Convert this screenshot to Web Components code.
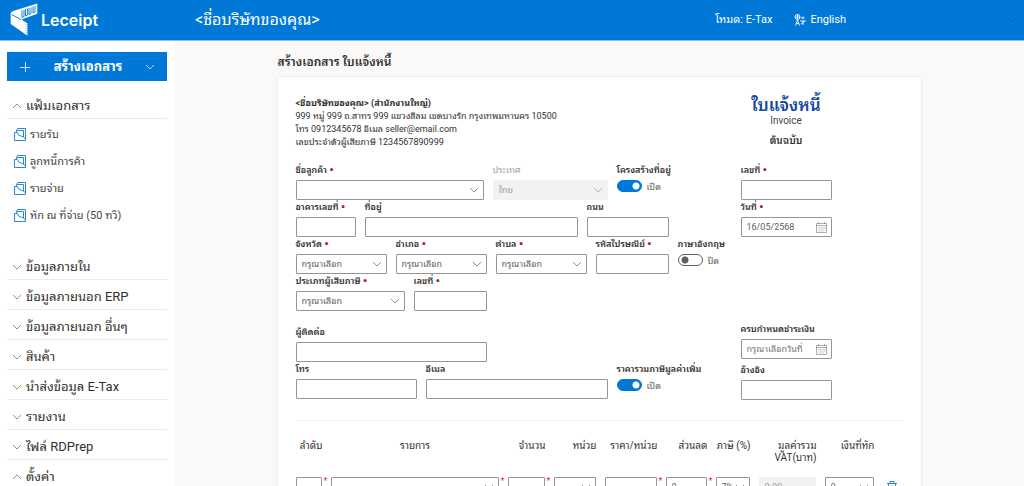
<!DOCTYPE html>
<html lang="th">
<head>
<meta charset="utf-8">
<title>Leceipt</title>
<style>
    html, body { margin: 0; height: 100%; }
    body {
        overflow: hidden;
        background: #faf9f8;
        color: #323130;
        font-family: Roboto, "Noto Sans Thai Looped", "Noto Looped Thai", Loma, Garuda, Waree, Sarabun, "Noto Serif Thai", "Noto Sans", sans-serif;
    }
</style>
</head>
<body>
<leceipt-app></leceipt-app>

<script>
const CHEVRON = '<svg class="chevron" viewBox="0 0 10 10" width="10" height="10" fill="none" stroke="currentColor" stroke-width="0.7"><path d="M1 3l4 4 4-4"/></svg>';

// shared reset for every shadow root
const BASE = `
    * { box-sizing: border-box; }
    svg { display: block; flex: none; }
    button, input, select { font: inherit; color: inherit; margin: 0; border-radius: 0; }
    a { color: inherit; text-decoration: none; }
`;

class BaseElement extends HTMLElement {
    connectedCallback() {
        if (this.shadowRoot) return;
        this.attachShadow({ mode: 'open' });
        this.shadowRoot.innerHTML = `<style>${BASE}${this.styles()}</style>${this.render()}`;
    }
    attr(name) {
        return this.getAttribute(name) || '';
    }
    styles() { return ''; }
    render() { return ''; }
}

class AppHeader extends BaseElement {
    styles() {
        return `
            :host { display: block; background: #0078d7; color: #fff; border-bottom: 1px solid #8cc0ec; }
            header { display: grid; grid-template-columns: 195px 1fr auto; align-items: center; height: 40px; }
            .brand { display: flex; align-items: center; gap: 3px; padding-left: 10px; font: 600 16px/20px Inter, sans-serif; }
            .company { font-size: 16px; line-height: 24px; }
            .tools { display: flex; align-items: center; font-size: 11px; line-height: 16px; padding-right: 7px; }
            .mode { display: flex; align-items: center; gap: 4px; margin-right: 8px; }
            .lang { display: flex; align-items: center; gap: 4px; margin-right: 161px; }
            button { display: flex; align-items: center; padding: 0; border: 0; background: none; }
            .chevron { color: #1b5c94; }
        `;
    }
    render() {
        return `
            <header>
                <a class="brand" href="#">
                    <svg viewBox="0 0 28 34" width="28" height="34">
                        <path fill="#fff" d="M.7 10.500Q1 8.700 3 8L27.300.5v10.300L11.500 16.500l5.900 3.700v12.500L.7 21z"/>
                        <path fill="none" stroke="#0078d7" stroke-width="0.9" d="M1.500 11.500l9.500 5M12 7.500v7l2-1v-6.500M15.500 6v7l2-1V5.500M19 5v6.500l2-1V4.500M23 3.500v6.500l2-1V3"/>
                        <path fill="none" stroke="#0078d7" stroke-width="0.6" stroke-dasharray="1 1" d="M16 21v11"/>
                    </svg>
                    Leceipt
                </a>
                <span class="company">&lt;ชื่อบริษัทของคุณ&gt;</span>
                <div class="tools">
                    <button class="mode">โหมด: E-Tax ${CHEVRON}</button>
                    <button class="lang">
                        <svg viewBox="0 0 12 12" width="12" height="12" fill="none" stroke="#fff" stroke-width="0.9">
                            <circle cx="3.500" cy="3" r="2.500"/><path d="M1 3h5M3.500.5v5M1.500 11.500L3.500 6l2 5.500M2 9.500h3M7 4h3.500M6 7h6M9 2.500v2M7 10q2.500-1 3-3M9 7v4"/>
                        </svg>
                        English
                    </button>
                    <button aria-label="บัญชี">${CHEVRON}</button>
                </div>
            </header>
        `;
    }
}

class NavGroup extends BaseElement {
    styles() {
        return `
            :host { display: block; }
            button {
                display: flex; align-items: center; gap: 4px; width: 100%; height: 30px; padding: 4px 5px 0;
                border: 0; border-bottom: 1px solid #edebe9; background: none;
                font-size: 13px; line-height: 20px; text-align: left;
            }
            .chevron { color: #605e5c; }
            :host([open]) .chevron { transform: rotate(180deg); }
        `;
    }
    render() {
        return `<button>${CHEVRON}${this.attr('label')}</button><slot></slot>`;
    }
}

class NavItem extends BaseElement {
    styles() {
        return `
            :host { display: block; }
            a { display: flex; align-items: center; gap: 4px; height: 27px; padding-left: 7px; font-size: 11px; line-height: 16px; color: #484644; }
        `;
    }
    render() {
        return `
            <a href="#">
                <svg viewBox="0 0 12 13" width="12" height="13" fill="none" stroke="#2b88d8" stroke-width="1">
                    <path d="M2.500 4.500V2.500l1-2h8v12H.5v-8h3L4.500 7l5 2 2 2"/><path d="M3 2.500h6.500V9"/>
                </svg>
                <slot></slot>
            </a>
        `;
    }
}

class AppSidebar extends BaseElement {
    styles() {
        return `
            :host { display: block; background: #fff; padding: 11px 7px 0; overflow: hidden; }
            .create {
                display: grid; grid-template-columns: 12px 1fr 10px; align-items: center; width: 100%; height: 29px;
                padding: 0 12px; border: 0; background: #0078d7; color: #fff; font-size: 13px; line-height: 20px; font-weight: 700;
            }
            nav { margin-top: 8px; }
            .files { padding: 2px 0 21px; }
        `;
    }
    render() {
        return `
            <button class="create">
                <svg viewBox="0 0 12 12" width="12" height="12" stroke="#fff" stroke-width="0.8" fill="none"><path d="M1 6.500h10M6.500 1v10"/></svg>
                <span>สร้างเอกสาร</span>
                ${CHEVRON}
            </button>
            <nav>
                <nav-group label="แฟ้มเอกสาร" open>
                    <div class="files">
                        <nav-item>รายรับ</nav-item>
                        <nav-item>ลูกหนี้การค้า</nav-item>
                        <nav-item>รายจ่าย</nav-item>
                        <nav-item>หัก ณ ที่จ่าย (50 ทวิ)</nav-item>
                    </div>
                </nav-group>
                <nav-group label="ข้อมูลภายใน"></nav-group>
                <nav-group label="ข้อมูลภายนอก ERP"></nav-group>
                <nav-group label="ข้อมูลภายนอก อื่นๆ"></nav-group>
                <nav-group label="สินค้า"></nav-group>
                <nav-group label="นำส่งข้อมูล E-Tax"></nav-group>
                <nav-group label="รายงาน"></nav-group>
                <nav-group label="ไฟล์ RDPrep"></nav-group>
                <nav-group label="ตั้งค่า" open></nav-group>
            </nav>
        `;
    }
}

// text box, drop-down or date box; the label is left out when the attribute is missing
class FormField extends BaseElement {
    styles() {
        return `
            :host { display: block; min-width: 0; }
            label { display: block; height: 17px; font-size: 9px; line-height: 15px; font-weight: 600; white-space: nowrap; }
            label i { color: #a4262c; font-size: 13px; line-height: 0; font-style: normal; vertical-align: -1px; }
            .box { display: grid; align-items: center; height: 20px; border: 1px solid #979593; border-radius: 1px; background: #fff; }
            .box > * { grid-area: 1 / 1; }
            input, select {
                width: 100%; min-width: 0; height: 18px; padding: 0 5px; border: 0; outline: 0;
                background: none; appearance: none; font-size: 9px; line-height: 16px; color: #605e5c;
            }
            input::placeholder { color: #797775; opacity: 1; }
            .box > svg { justify-self: end; margin-right: 4px; color: #605e5c; pointer-events: none; }
            :host([disabled]) label { color: #a19f9d; font-weight: 400; }
            :host([disabled]) .box { border-color: #f3f2f1; background: #f3f2f1; }
            :host([disabled]) :is(input, select, svg) { color: #a19f9d; opacity: 1; }
        `;
    }
    render() {
        const kind = this.attr('kind');
        const name = this.attr('label') || this.attr('name');
        const disabled = this.hasAttribute('disabled') ? 'disabled' : '';
        const star = this.hasAttribute('required') ? ' <i>•</i>' : '';
        const label = this.hasAttribute('label') ? `<label for="control">${name}${star}</label>` : '';
        const aria = label ? '' : `aria-label="${name}"`;
        let control = `<input id="control" type="text" value="${this.attr('value')}" placeholder="${this.attr('placeholder')}" ${aria} ${disabled}>`;
        if (kind === 'select') {
            control = `<select id="control" ${aria} ${disabled}><option>${this.attr('value')}</option></select>${CHEVRON}`;
        }
        if (kind === 'date') {
            control += `
                <svg viewBox="0 0 11 11" width="11" height="11" fill="none" stroke="#797775" stroke-width="0.6">
                    <path d="M.5 1.500h10v9H.5zM.5 3.500h10M2.500 0v2M8.500 0v2"/>
                    <path stroke-dasharray="1 0.700" d="M3 5v4.500M5 5v4.500M7 5v4.500M9 5v3"/>
                </svg>`;
        }
        return `${label}<div class="box">${control}</div>`;
    }
}

class ToggleSwitch extends BaseElement {
    styles() {
        return `
            :host { display: block; min-width: 0; }
            label { display: block; height: 17px; font-size: 9px; line-height: 15px; font-weight: 600; white-space: nowrap; }
            .row { display: flex; align-items: center; gap: 5px; height: 12px; font-size: 9px; color: #605e5c; }
            input {
                appearance: none; width: 25px; height: 12px; border: 1px solid #605e5c; border-radius: 6px;
                background: radial-gradient(circle at 6px 5px, #605e5c 3px, transparent 4px) #fff;
            }
            input:checked { border-color: #0078d7; background: radial-gradient(circle at 18px 5px, #fff 3px, transparent 4px) #0078d7; }
        `;
    }
    render() {
        const on = this.hasAttribute('checked');
        return `
            <label for="control">${this.attr('label')}</label>
            <div class="row"><input id="control" type="checkbox" role="switch" ${on ? 'checked' : ''}><span>${on ? 'เปิด' : 'ปิด'}</span></div>
        `;
    }
}

class ItemTable extends BaseElement {
    styles() {
        return `
            :host { display: block; }
            table { width: 100%; table-layout: fixed; border-collapse: collapse; }
            th { height: 30px; padding: 0 8px 0 0; vertical-align: top; text-align: right; font-size: 10px; line-height: 12px; font-weight: 400; white-space: nowrap; }
            th.name { text-align: center; }
            td { padding: 7px 0 0; vertical-align: top; }
            .cell { display: grid; grid-template-columns: 1fr 9px; font-size: 9px; line-height: 8px; color: #d13438; }
            .cell span { padding-left: 2px; }
            .trash { padding: 4px 0 0 4px; border: 0; background: none; }
        `;
    }
    cell(name, required, rest = '') {
        return `<td><div class="cell"><form-field name="${name}" ${rest}></form-field><span>${required ? '*' : ''}</span></div></td>`;
    }
    render() {
        return `
            <table>
                <colgroup>
                    <col style="width:35px"><col><col style="width:46px"><col style="width:51px"><col style="width:61px">
                    <col style="width:50px"><col style="width:43px"><col style="width:66px"><col style="width:58px"><col style="width:20px">
                </colgroup>
                <thead>
                    <tr>
                        <th>ลำดับ</th><th class="name">รายการ</th><th>จำนวน</th><th>หน่วย</th><th>ราคา/หน่วย</th>
                        <th>ส่วนลด</th><th>ภาษี (%)</th><th>มูลค่ารวม<br>VAT(บาท)</th><th>เงินที่หัก</th><th></th>
                    </tr>
                </thead>
                <tbody>
                    <tr>
                        ${this.cell('ลำดับ', true)}
                        ${this.cell('รายการ', true, 'kind="select"')}
                        ${this.cell('จำนวน', true)}
                        ${this.cell('หน่วย', false, 'kind="select"')}
                        ${this.cell('ราคา/หน่วย', true)}
                        ${this.cell('ส่วนลด', true, 'value="0"')}
                        ${this.cell('ภาษี', false, 'kind="select" value="7%"')}
                        ${this.cell('มูลค่ารวม', false, 'value="0.00" disabled')}
                        ${this.cell('เงินที่หัก', false, 'kind="select" value="0"')}
                        <td>
                            <button class="trash" aria-label="ลบ">
                                <svg viewBox="0 0 10 11" width="10" height="11" fill="none" stroke="#2b88d8"><path d="M0 2.500h10M3 2V.5h4V2M1.500 3l.5 7.500h6l.5-7.500M4 4.500v4M6 4.500v4"/></svg>
                            </button>
                        </td>
                    </tr>
                </tbody>
            </table>
        `;
    }
}

class InvoiceForm extends BaseElement {
    styles() {
        return `
            :host { display: block; padding: 18px; background: #fff; box-shadow: 0 0 2px rgba(0, 0, 0, 0.14); }
            .top { display: grid; grid-template-columns: 445fr 91fr 71fr; }
            .seller { height: 68px; padding-top: 2px; font-size: 9px; line-height: 13px; white-space: nowrap; }
            .seller p { margin: 0; }
            .title { display: flex; flex-direction: column; align-items: center; height: 68px; white-space: nowrap; }
            .title h2 { margin: 0; font-size: 17px; line-height: 20px; font-weight: 600; color: #1449a0; }
            .title span { font-size: 10px; line-height: 12px; color: #484644; }
            .title b { font-size: 10px; line-height: 16px; margin-top: 6px; font-weight: 600; }
            .row { display: grid; gap: 9px; }
            .r1 { grid-template-columns: 188fr 115fr 124fr; }
            .r2 { grid-template-columns: 60fr 213fr 82fr 63fr; }
            .r3 { grid-template-columns: 91fr 91fr 91fr 73fr 63fr; }
            .r4 { grid-template-columns: 109fr 73fr 245fr; }
            .r5 { grid-template-columns: 191fr 245fr; margin-top: 14px; }
            .r6 { grid-template-columns: 121fr 182fr 124fr; }
            .due { margin-top: 85px; }
            .last { margin-top: 4px; }
            hr { margin: 20px 0 19px; border: 0; border-top: 1px solid #f3f2f1; }
        `;
    }
    render() {
        return `
            <div class="top">
                <div class="seller">
                    <b>&lt;ชื่อบริษัทของคุณ&gt; (สำนักงานใหญ่)</b>
                    <p>999 หมู่ 999 ถ.สาทร 999 แขวงสีลม เขตบางรัก กรุงเทพมหานคร 10500</p>
                    <p>โทร 0912345678 อีเมล seller@email.com</p>
                    <p>เลขประจำตัวผู้เสียภาษี 1234567890999</p>
                </div>
                <div class="title"><h2>ใบแจ้งหนี้</h2><span>Invoice</span><b>ต้นฉบับ</b></div>
            </div>
            <div class="top">
                <div>
                    <div class="row r1">
                        <form-field label="ชื่อลูกค้า" kind="select" required></form-field>
                        <form-field label="ประเทศ" kind="select" value="ไทย" disabled></form-field>
                        <toggle-switch label="โครงสร้างที่อยู่" checked></toggle-switch>
                    </div>
                    <div class="row r2">
                        <form-field label="อาคารเลขที่" required></form-field>
                        <form-field label="ที่อยู่"></form-field>
                        <form-field label="ถนน"></form-field>
                    </div>
                    <div class="row r3">
                        <form-field label="จังหวัด" kind="select" value="กรุณาเลือก" required></form-field>
                        <form-field label="อำเภอ" kind="select" value="กรุณาเลือก" required></form-field>
                        <form-field label="ตำบล" kind="select" value="กรุณาเลือก" required></form-field>
                        <form-field label="รหัสไปรษณีย์" required></form-field>
                        <toggle-switch label="ภาษาอังกฤษ"></toggle-switch>
                    </div>
                    <div class="row r4">
                        <form-field label="ประเภทผู้เสียภาษี" kind="select" value="กรุณาเลือก" required></form-field>
                        <form-field label="เลขที่" required></form-field>
                    </div>
                    <div class="row r5">
                        <form-field label="ผู้ติดต่อ"></form-field>
                    </div>
                    <div class="row r6">
                        <form-field label="โทร"></form-field>
                        <form-field label="อีเมล"></form-field>
                        <toggle-switch label="ราคารวมภาษีมูลค่าเพิ่ม" checked></toggle-switch>
                    </div>
                </div>
                <div>
                    <form-field label="เลขที่" required></form-field>
                    <form-field label="วันที่" kind="date" value="16/05/2568" required></form-field>
                    <form-field class="due" label="ครบกำหนดชำระเงิน" kind="date" placeholder="กรุณาเลือกวันที่"></form-field>
                    <form-field class="last" label="อ้างอิง"></form-field>
                </div>
            </div>
            <hr>
            <item-table></item-table>
        `;
    }
}

class LeceiptApp extends BaseElement {
    styles() {
        return `
            :host { display: grid; grid-template-rows: auto 1fr; height: 100vh; }
            .body { display: grid; grid-template-columns: 174px 1fr; min-height: 0; }
            main { min-width: 0; overflow: hidden; padding: 10px 16px 0; }
            .page { max-width: 643px; margin: 0 auto; }
            h1 { margin: 0 0 4px; font-size: 12px; line-height: 22px; font-weight: 600; }
        `;
    }
    render() {
        return `
            <app-header></app-header>
            <div class="body">
                <app-sidebar></app-sidebar>
                <main>
                    <div class="page">
                        <h1>สร้างเอกสาร ใบแจ้งหนี้</h1>
                        <invoice-form></invoice-form>
                    </div>
                </main>
            </div>
        `;
    }
}

customElements.define('app-header', AppHeader);
customElements.define('nav-group', NavGroup);
customElements.define('nav-item', NavItem);
customElements.define('app-sidebar', AppSidebar);
customElements.define('form-field', FormField);
customElements.define('toggle-switch', ToggleSwitch);
customElements.define('item-table', ItemTable);
customElements.define('invoice-form', InvoiceForm);
customElements.define('leceipt-app', LeceiptApp);
</script>
</body>
</html>
